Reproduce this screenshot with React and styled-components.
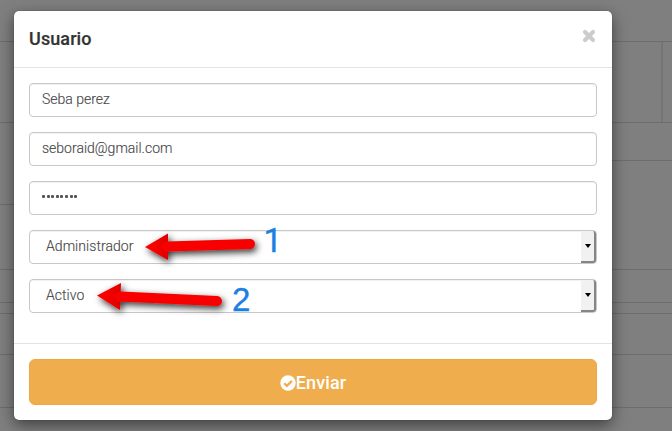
import React from "react";
import styled, { createGlobalStyle } from "styled-components";

const GlobalStyle = createGlobalStyle`
  *, *::before, *::after { box-sizing: border-box; }
  body { margin: 0; overflow: hidden; background: #7f7f7f; font-family: Roboto, sans-serif; }
`;

const Page = styled.div`
  position: relative;
  width: 672px;
  height: 431px;
  display: flex;
  justify-content: space-between;
  overflow: hidden;
  background: #7f7f7f;
`;

const BackdropColumn = styled.div`
  width: ${(p) => p.$width}px;
  display: flex;
  flex-direction: column;
`;

const BackdropRow = styled.div`
  flex: none;
  height: ${(p) => p.$height}px;
  border-bottom: 1px solid #6d6d6d;
  padding-right: 9px;
`;

const BackdropCell = styled.div`
  height: 100%;
  border-right: 2px solid #747474;
`;

const Dialog = styled.form`
  position: absolute;
  left: 14px;
  top: 11px;
  width: 598px;
  height: 409px;
  display: flex;
  flex-direction: column;
  background: #fff;
  border-radius: 5px;
  box-shadow: 0 0 1px rgba(0, 0, 0, 0.5), 0 5px 15px rgba(0, 0, 0, 0.5);
`;

const Header = styled.header`
  height: 57px;
  padding: 0 15px;
  display: flex;
  justify-content: space-between;
  border-bottom: 1px solid #e3e3e3;
`;

const Title = styled.h4`
  margin: 15px 0 0;
  font-size: 18px;
  line-height: 26px;
  font-weight: 500;
  color: #333;
  letter-spacing: 0.1px;
  -webkit-text-stroke: 0.2px #333;
`;

const CloseButton = styled.button`
  margin: 18px 1px 0 0;
  padding: 0;
  width: 14px;
  height: 14px;
  border: 0;
  background: none;
  color: #ccc;
  svg { display: block; }
`;

const Fields = styled.div`
  flex: 1;
  padding: 15px;
  display: flex;
  flex-direction: column;
  gap: 15px;
`;

const Field = styled.div`
  height: 34px;
  display: flex;
  justify-content: space-between;
  border: 1px solid #c8c8c8;
  border-radius: 4px;
  box-shadow: inset 0 1px 1px rgba(0, 0, 0, 0.06);
  padding-left: ${(p) => (p.$select ? 16 : 12)}px;
  font-size: 14px;
  line-height: ${(p) => (p.$select ? 31 : 30)}px;
  color: #484848;
`;

const Value = styled.span`
  font-weight: 300;
  letter-spacing: ${(p) => p.$spacing || 0}px;
  -webkit-text-stroke: 0.15px #484848;
`;

const Password = styled.span`
  display: flex;
  align-items: center;
  gap: 1.6px;
  height: 29px;
`;

const Dot = styled.i`
  width: 3px;
  height: 3px;
  border-radius: 1px;
  background: #555;
`;

const SelectArrow = styled.span`
  width: 15px;
  height: 32px;
  display: flex;
  align-items: center;
  justify-content: center;
  padding-left: 1px;
  background: #f1f1f1;
  border-right: 2px solid #858585;
  border-bottom: 2px solid #858585;
  border-radius: 0 3px 3px 0;
`;

const Footer = styled.footer`
  height: 77px;
  padding: 15px;
  border-top: 1px solid #e3e3e3;
`;

const SubmitButton = styled.button`
  width: 100%;
  height: 46px;
  padding: 1px 0 0;
  display: flex;
  align-items: center;
  justify-content: center;
  border: 1px solid #eda641;
  border-radius: 6px;
  background: #f0ad4e;
  color: #fff;
  font: 500 18px/24px Roboto, sans-serif;
  letter-spacing: 0.1px;
`;

const Annotations = styled.svg`
  position: absolute;
  left: 0;
  top: 0;
  pointer-events: none;
`;

const Marker = styled.text`
  font: 33px ${(p) => p.$family}, sans-serif;
  fill: #1c80e3;
  stroke: #1c80e3;
  stroke-width: 0.4px;
`;

const leftRows = [42, 81, 82, 65, 33, 11, 41, 53];
const rightRows = [42, 81, 38, 109, 33, 11, 41, 53];

function Backdrop({ rows, width, split }) {
  return (
    <BackdropColumn $width={width}>
      {rows.map((height, i) => (
        <BackdropRow key={i} $height={height}>
          {split === i && <BackdropCell />}
        </BackdropRow>
      ))}
    </BackdropColumn>
  );
}

function Select({ value }) {
  return (
    <Field $select>
      <Value $spacing={0.05}>{value}</Value>
      <SelectArrow>
        <svg width="6" height="4" viewBox="0 0 6 4"><path d="M0 0h6L3 4z" fill="#000" /></svg>
      </SelectArrow>
    </Field>
  );
}

export default function App() {
  return (
    <>
      <GlobalStyle />
      <Page>
        <Backdrop rows={leftRows} width={20} />
        <Backdrop rows={rightRows} width={72} split={1} />
        <Dialog onSubmit={(e) => e.preventDefault()}>
          <Header>
            <Title>Usuario</Title>
            <CloseButton type="button" aria-label="Cerrar">
              <svg width="14" height="14" viewBox="0 0 14 14">
                <path d="M3 3l8 8M11 3l-8 8" stroke="currentColor" strokeWidth="4.2" strokeLinecap="round" />
              </svg>
            </CloseButton>
          </Header>
          <Fields>
            <Field><Value>Seba perez</Value></Field>
            <Field><Value>seboraid@gmail.com</Value></Field>
            <Field>
              <Password>
                {Array.from({ length: 8 }, (_, i) => <Dot key={i} />)}
              </Password>
            </Field>
            <Select value="Administrador" />
            <Select value="Activo" />
          </Fields>
          <Footer>
            <SubmitButton>
              <svg width="16" height="16" viewBox="0 0 16 16">
                <circle cx="8" cy="8" r="7.7" fill="#fff" />
                <path d="M4.2 8.2l2.7 2.7 5-5" fill="none" stroke="#f0ad4e" strokeWidth="2.2" />
              </svg>
              Enviar
            </SubmitButton>
          </Footer>
        </Dialog>
        <Annotations width="672" height="431" viewBox="0 0 672 431">
          <defs>
            <filter id="arrow-shadow" x="-20%" y="-50%" width="140%" height="220%">
              <feDropShadow dx="2" dy="3" stdDeviation="3.5" floodColor="#000" floodOpacity="0.8" />
            </filter>
            <linearGradient id="arrow-head" x1="0" y1="0" x2="1" y2="0">
              <stop offset="0.4" stopColor="#f90000" />
              <stop offset="1" stopColor="#dc0000" />
            </linearGradient>
          </defs>
          <g fill="url(#arrow-head)" stroke="#f90000" filter="url(#arrow-shadow)">
            <path d="M145 247L168 233.500V260z" stroke="none" />
            <path d="M167 246.500L250 244" strokeWidth="10" strokeLinecap="round" />
          </g>
          <g fill="url(#arrow-head)" stroke="#f90000" filter="url(#arrow-shadow)">
            <path d="M97 295.500L121 283L120 310z" stroke="none" />
            <path d="M120 296.500L217 301" strokeWidth="10" strokeLinecap="round" />
          </g>
          <Marker $family="Roboto" x="263.500" y="252">1</Marker>
          <Marker $family="'Liberation Sans'" x="232" y="311">2</Marker>
        </Annotations>
      </Page>
    </>
  );
}
